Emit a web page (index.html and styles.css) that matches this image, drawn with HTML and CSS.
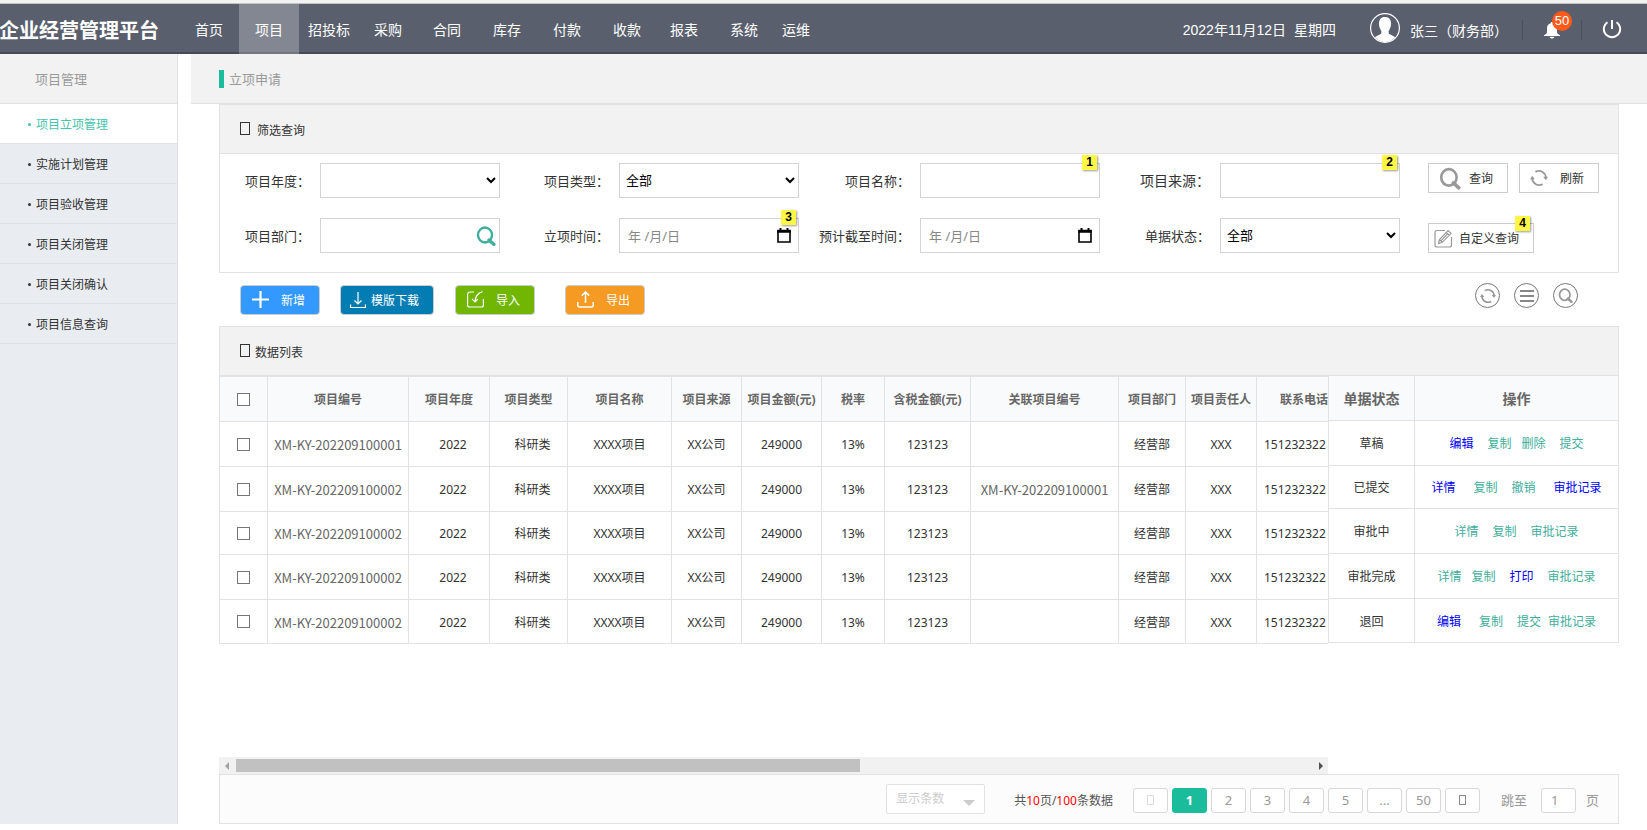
FILE: index.html
```
<!DOCTYPE html>
<html lang="zh-CN">
<head>
<meta charset="utf-8">
<title>企业经营管理平台</title>
<link rel="stylesheet" href="styles.css">
</head>
<body>
<svg width="0" height="0" class="defs" aria-hidden="true">
  <symbol id="i-search" viewBox="0 0 20 20"><ellipse cx="9" cy="9" rx="7" ry="7.500" fill="none" stroke="currentColor" stroke-width="2.400"/><path d="M13 14l5 4.500" stroke="currentColor" stroke-width="3.200" stroke-linecap="round"/></symbol>
  <symbol id="i-refresh" viewBox="0 0 20 20"><g fill="none" stroke="currentColor" stroke-width="2"><path d="M6 3.200A7.800 7.800 0 0 1 17.600 9.500M14 16.800A7.800 7.800 0 0 1 2.400 10.500"/></g><path d="M0 11.300L2.400 7.600l3 3.700zM14.600 8.700H20l-2.400 3.700z" fill="currentColor"/></symbol>
</svg>
<div class="strip"></div>
<header class="top">
  <h1 class="brand">企业经营管理平台</h1>
  <nav class="nav">
    <a href="#">首页</a><a href="#" class="on">项目</a><a href="#">招投标</a><a href="#">采购</a><a href="#">合同</a><a href="#">库存</a><a href="#">付款</a><a href="#">收款</a><a href="#">报表</a><a href="#">系统</a><a href="#">运维</a>
  </nav>
  <div class="date"><span>2022年11月12日</span><span>星期四</span></div>
  <svg class="avatar" viewBox="0 0 30 30"><circle cx="15" cy="15" r="14.400" fill="none" stroke="#fff" stroke-width="1.200"/><path d="M15 4c4 0 6 2.500 6 6.500 0 3-.8 5.500-2.300 7.200v2.300c0 1 1.500 1.600 3.500 2.400 1.200.5 2.300 1 2.800 1.800A13.500 13.500 0 0 1 15 29 13.500 13.500 0 0 1 5 24.200c.5-.8 1.600-1.300 2.800-1.800 2-.8 3.500-1.400 3.500-2.400v-2.300C9.800 16 9 13.500 9 10.500 9 6.500 11 4 15 4z" fill="#fff"/></svg>
  <span class="user">张三（财务部）</span>
  <button class="bell" type="button" aria-label="通知"><svg width="16" height="17" viewBox="0 0 16 17"><path d="M8 0c.8 0 1.300.5 1.300 1.200 2.400.6 3.700 2.600 3.700 5V10c0 1.500 1 2.200 3 3.200V14H0v-.8C2 12.200 3 11.500 3 10V6.200c0-2.400 1.300-4.400 3.700-5C6.700.5 7.200 0 8 0zM5.500 14.800h5C10.300 16 9.300 16.600 8 16.600S5.700 16 5.500 14.800z" fill="#fff"/></svg><span class="count">50</span></button>
  <button class="power" type="button" aria-label="退出"><svg width="20" height="20" viewBox="0 0 20 20" fill="none" stroke="#fff" stroke-width="1.900"><path d="M5.500 3.200a8.200 8.200 0 1 0 9 0M10 1v9"/></svg></button>
</header>
<div class="layout">
  <aside class="side">
    <h2>项目管理</h2>
    <a href="#" class="on">项目立项管理</a><a href="#">实施计划管理</a><a href="#">项目验收管理</a><a href="#">项目关闭管理</a><a href="#">项目关闭确认</a><a href="#">项目信息查询</a>
  </aside>
  <main class="main">
    <h2 class="title"><i></i>立项申请</h2>
    <div class="body">
      <section class="panel">
        <h3><i class="box"></i><span class="wide">筛选查询</span></h3>
        <form class="filter">
          <label for="f1">项目年度：</label><div class="field"><select id="f1"><option></option></select></div>
          <label for="f2">项目类型：</label><div class="field"><select id="f2"><option>全部</option></select></div>
          <label for="f3">项目名称：</label><div class="field"><input id="f3" type="text"><b class="tag">1</b></div>
          <label for="f4" class="large">项目来源：</label><div class="field"><input id="f4" type="text"><b class="tag">2</b></div>
          <div class="btns"><button class="btn" type="button"><svg width="22" height="23"><use href="#i-search"/></svg><span>查询</span></button><button class="btn" type="button"><svg width="18" height="18"><use href="#i-refresh"/></svg><span>刷新</span></button></div>
          <label for="f5">项目部门：</label><div class="field"><input id="f5" type="text"><svg class="pick" width="20" height="20"><use href="#i-search"/></svg></div>
          <label for="f6">立项时间：</label><div class="field"><input id="f6" type="text" placeholder="年 /月/日"><svg class="cal" width="14" height="15" viewBox="0 0 14 15"><path d="M1 3h12v11H1z" fill="none" stroke="#000" stroke-width="1.600"/><path d="M.3 1.800h13.400v3H.3zM2.500 0h2v3h-2zM9.500 0h2v3h-2z"/></svg><b class="tag">3</b></div>
          <label for="f7">预计截至时间：</label><div class="field"><input id="f7" type="text" placeholder="年 /月/日"><svg class="cal" width="14" height="15" viewBox="0 0 14 15"><path d="M1 3h12v11H1z" fill="none" stroke="#000" stroke-width="1.600"/><path d="M.3 1.800h13.400v3H.3zM2.500 0h2v3h-2zM9.500 0h2v3h-2z"/></svg></div>
          <label for="f8">单据状态：</label><div class="field"><select id="f8"><option>全部</option></select></div>
          <div class="btns low"><button class="btn custom" type="button"><svg width="19" height="19" viewBox="0 0 19 19" fill="none" stroke="#999" stroke-width="1.200"><path d="M11 1.500H3a2 2 0 0 0-2 2V16a2 2 0 0 0 2 2h12.500a2 2 0 0 0 2-2V8"/><path d="M4.500 14.500l1-4L14 1.500l3 2.800-8.700 9zM12.200 3.400l3 2.800M5.500 10.500l2.800 2.800M7 11.800l6.500-7"/></svg><span>自定义查询</span><b class="tag">4</b></button></div>
        </form>
      </section>
      <div class="tools">
        <button class="act add" type="button"><svg width="17" height="17" viewBox="0 0 17 17" stroke="#fff" stroke-width="2.200"><path d="M8.500 0v17M0 8.500h17"/></svg><span>新增</span></button>
        <button class="act tpl" type="button"><svg width="16" height="16" viewBox="0 0 16 16" fill="none" stroke="#fff" stroke-width="1.200"><path d="M8 0v12M4.500 8.500L8 12l3.500-3.500M.6 12.500v3h14.800v-3"/></svg><span>模版下载</span></button>
        <button class="act imp" type="button"><svg width="17" height="17" viewBox="0 0 17 17" fill="none" stroke="#fff" stroke-width="1.200"><path d="M7 1H3a2.400 2.400 0 0 0-2.400 2.400V14A2 2 0 0 0 2.600 16h11.800a2 2 0 0 0 2-2V8M15.500.6C11 2 8.500 5 8 10.500M5 7.800l3 3 2.800-2.600"/></svg><span>导入</span></button>
        <button class="act exp" type="button"><svg width="17" height="17" viewBox="0 0 17 17" fill="none" stroke="#fff" stroke-width="1.500"><path d="M8.500 12V1.200M4.800 4.600l3.700-3.700 3.700 3.700M.8 11v3.500a1.500 1.500 0 0 0 1.500 1.500h12.400a1.500 1.500 0 0 0 1.500-1.500V11"/></svg><span>导出</span></button>
        <div class="rounds">
          <button type="button" aria-label="刷新"><svg width="16" height="16"><use href="#i-refresh"/></svg></button>
          <button type="button" aria-label="列表"><svg width="14" height="12" viewBox="0 0 14 12" stroke="#888" stroke-width="1.800"><path d="M0 1h14M0 6h14M0 11h14"/></svg></button>
          <button type="button" aria-label="搜索"><svg width="15" height="15"><use href="#i-search"/></svg></button>
        </div>
      </div>
      <section class="panel list"><h3><i class="box"></i><span>数据列表</span></h3></section>
      <div class="grid">
        <div class="scroll">
          <table class="data">
            <colgroup><col class="c48"><col class="c141"><col class="c81"><col class="c78"><col class="c104"><col class="c70"><col class="c80"><col class="c63"><col class="c86"><col class="c148"><col class="c67"><col class="c71"><col></colgroup>
            <thead><tr><th><input type="checkbox" aria-label="全选"></th><th>项目编号</th><th>项目年度</th><th>项目类型</th><th>项目名称</th><th>项目来源</th><th>项目金额(元)</th><th>税率</th><th>含税金额(元)</th><th>关联项目编号</th><th>项目部门</th><th>项目责任人</th><th class="tel">联系电话</th></tr></thead>
            <tbody>
            <tr><td><input type="checkbox" aria-label="选择"></td><td class="no">XM-KY-202209100001</td><td class="in">2022</td><td class="in">科研类</td><td>XXXX项目</td><td>XX公司</td><td>249000</td><td>13%</td><td>123123</td><td></td><td>经营部</td><td>XXX</td><td class="tel">151232322</td></tr>
            <tr><td><input type="checkbox" aria-label="选择"></td><td class="no">XM-KY-202209100002</td><td class="in">2022</td><td class="in">科研类</td><td>XXXX项目</td><td>XX公司</td><td>249000</td><td>13%</td><td>123123</td><td class="no">XM-KY-202209100001</td><td>经营部</td><td>XXX</td><td class="tel">151232322</td></tr>
            <tr class="short"><td><input type="checkbox" aria-label="选择"></td><td class="no">XM-KY-202209100002</td><td class="in">2022</td><td class="in">科研类</td><td>XXXX项目</td><td>XX公司</td><td>249000</td><td>13%</td><td>123123</td><td></td><td>经营部</td><td>XXX</td><td class="tel">151232322</td></tr>
            <tr><td><input type="checkbox" aria-label="选择"></td><td class="no">XM-KY-202209100002</td><td class="in">2022</td><td class="in">科研类</td><td>XXXX项目</td><td>XX公司</td><td>249000</td><td>13%</td><td>123123</td><td></td><td>经营部</td><td>XXX</td><td class="tel">151232322</td></tr>
            <tr class="last"><td><input type="checkbox" aria-label="选择"></td><td class="no">XM-KY-202209100002</td><td class="in">2022</td><td class="in">科研类</td><td>XXXX项目</td><td>XX公司</td><td>249000</td><td>13%</td><td>123123</td><td></td><td>经营部</td><td>XXX</td><td class="tel">151232322</td></tr>
            </tbody>
          </table>
        </div>
        <table class="data fixed">
          <colgroup><col class="c86"><col></colgroup>
          <thead><tr><th>单据状态</th><th>操作</th></tr></thead>
          <tbody>
          <tr><td>草稿</td><td><a href="#" class="blue">编辑</a><a href="#" class="g14">复制</a><a href="#" class="g10">删除</a><a href="#" class="g14">提交</a></td></tr>
          <tr class="short"><td>已提交</td><td><a href="#" class="blue">详情</a><a href="#" class="g18">复制</a><a href="#" class="g14">撤销</a><a href="#" class="g18 blue">审批记录</a></td></tr>
          <tr><td>审批中</td><td><a href="#">详情</a><a href="#" class="g14">复制</a><a href="#" class="g14">审批记录</a></td></tr>
          <tr><td>审批完成</td><td><a href="#">详情</a><a href="#" class="g10">复制</a><a href="#" class="g14 blue">打印</a><a href="#" class="g14">审批记录</a></td></tr>
          <tr class="last"><td>退回</td><td><a href="#" class="blue">编辑</a><a href="#" class="g18">复制</a><a href="#" class="g14">提交</a><a href="#" class="g7">审批记录</a></td></tr>
          </tbody>
        </table>
      </div>
      <div class="bar"><i class="larr"></i><div class="track"><div class="thumb"></div></div><i class="rarr"></i></div>
      <footer class="pager">
        <button class="size" type="button">显示条数<i></i></button>
        <span class="total">共<em>10</em>页/<em>100</em>条数据</span>
        <div class="pages">
          <button type="button" class="off" aria-label="上一页"><i class="mini"></i></button><button type="button" class="on">1</button><button type="button">2</button><button type="button">3</button><button type="button">4</button><button type="button">5</button><button type="button">...</button><button type="button">50</button><button type="button" aria-label="下一页"><i class="mini"></i></button>
        </div>
        <label for="pg">跳至</label><input id="pg" type="text" value="1"><span>页</span>
      </footer>
    </div>
  </main>
</div>
</body>
</html>
```
FILE: styles.css
```
* { box-sizing: border-box; }
body { margin: 0; background: #fff; color: #333; font: 12px/18px "Noto Sans", "Noto Sans CJK SC", sans-serif; }
a { text-decoration: none; color: inherit; }
h1, h2, h3 { margin: 0; font-weight: normal; }
button, input, select { font: inherit; color: inherit; margin: 0; padding: 0; }
button { background: none; border: 0; display: flex; align-items: center; }
.defs { position: absolute; }

.strip { height: 4px; background: #f2f2f2; border-bottom: 1px solid #c4c4c4; }
.top { display: flex; align-items: center; height: 50px; background: #5a5f6d; border-bottom: 2px solid #474b58; color: #fff; font: 14px/20px "Liberation Sans", "Noto Sans CJK SC", sans-serif; }
.brand { flex: none; width: 180px; margin-left: -1px; padding-top: 6px; font-size: 20px; font-weight: bold; line-height: 28px; white-space: nowrap; }
.nav { display: grid; grid-template-columns: 60px 60px 60px 58px repeat(4, 60px) 54px 66px 38px; height: 50px; margin-bottom: -2px; flex: none; line-height: 52px; text-align: center; }
.nav .on { background: rgba(255, 255, 255, .25); }
.date { margin-left: auto; padding-top: 4px; display: flex; gap: 8px; white-space: nowrap; }
.avatar { width: 30px; height: 30px; margin-left: 34px; flex: none; }
.user { margin-left: 10px; padding-top: 6px; white-space: nowrap; }
.bell { position: relative; height: 20px; margin: 4px 0 0 14px; padding: 0 21px; border: solid #4a4e5b; border-width: 0 1px; }
.count { position: absolute; left: 29px; top: -9px; width: 20px; height: 20px; border-radius: 50%; background: #ff5a1a; font-size: 13px; line-height: 20px; text-align: center; }
.power { margin: 2px 25px 0 20px; }

.layout { display: flex; align-items: stretch; }
.side { flex: none; width: 178px; background: #e9edf2; border-right: 1px solid #e0e0e0; }
.side h2 { height: 50px; padding-left: 35px; background: #f2f2f2; border-bottom: 1px solid #e2e2e2; font-size: 13px; line-height: 50px; color: #999; }
.side a { display: flex; align-items: center; gap: 5px; height: 40px; padding: 2px 0 0 28px; border-bottom: 1px solid #e0e3e6; }
.side a::before { content: ""; width: 3px; height: 3px; border-radius: 50%; background: currentColor; }
.side .on { background: #fff; color: #45c4ac; }
.main { flex: 1; min-width: 0; margin-left: 13px; }
.title { display: flex; align-items: center; gap: 5px; height: 50px; padding-left: 28px; background: #f2f2f2; border-bottom: 1px solid #e2e2e2; font-size: 13px; color: #999; }
.title i { width: 5px; height: 18px; background: #1abc9c; }
.body { margin: 0 28px; }

.panel { border: 1px solid #e2e2e2; }
.panel h3 { display: flex; align-items: center; gap: 5px; height: 49px; padding: 4px 0 0 20px; background: #f2f2f2; border-bottom: 1px solid #e2e2e2; font-size: 12px; }
.panel .wide { margin-left: 2px; }
.list { border-bottom: 0; }
.box { width: 10px; height: 13px; margin-bottom: 6px; border: 1px solid #333; }
.filter { display: grid; grid-template-columns: 90px 180px 119px 180px 121px 180px 120px 180px 1fr; grid-template-rows: 35px 35px; row-gap: 20px; column-gap: 0; padding: 9px 0 19px; font-size: 13px; align-items: center; }
.filter label { text-align: right; white-space: nowrap; }
.filter .large { font-size: 14px; }
.field { position: relative; height: 35px; margin-left: 10px; margin-right: -10px; }
.field input, .field select { width: 100%; height: 35px; border: 1px solid #d4d4d4; background: #fff; color: #000; border-radius: 0; padding: 0 8px; outline: 0; }
.field select { padding: 0 2px 2px; }
.field input::placeholder { color: #888; opacity: 1; }
.pick, .cal { position: absolute; right: 4px; top: 8px; color: #40ae9c; }
.cal { right: 8px; top: 10px; }
.tag { position: absolute; right: 3px; top: -8px; width: 15px; height: 15px; background: #fff745; box-shadow: 1px 1px 2px rgba(0, 0, 0, .4); color: #000; font: bold 12px/15px "Liberation Sans", sans-serif; text-align: center; }
.btns { display: flex; gap: 11px; margin-left: 38px; align-self: start; }
.low { align-self: end; }
.btn { position: relative; justify-content: space-between; width: 80px; height: 30px; padding: 0 14px 0 10px; border: 1px solid #ccc; background: #fff; font-size: 12px; color: #333; }
.btn span { padding-top: 2px; }
.btn svg { color: #999; flex: none; }
.custom { width: 106px; padding: 0 14px 0 5px; }

.tools { display: flex; align-items: center; height: 53px; padding: 0 41px 0 21px; }
.act { justify-content: space-between; width: 80px; height: 30px; margin-right: 20px; padding: 2px 14px 0 11px; border: 1px solid #ccc; border-radius: 4px; color: #fff; }
.act svg { margin-bottom: 2px; }
.add { background: #3399ff; }
.tpl { width: 94px; background: #027db4; margin-right: 21px; padding: 2px 14px 0 9px; }
.imp { background: #70b603; margin-right: 30px; }
.exp { background: #f59a23; }
.rounds { display: flex; gap: 14px; margin-left: auto; margin-bottom: 8px; color: #999; }
.rounds button { justify-content: center; width: 25px; height: 25px; border: 1px solid #777; border-radius: 50%; color: #999; }

.grid { display: flex; align-items: flex-start; height: 381px; }
.scroll { flex: 1; min-width: 0; overflow-x: auto; scrollbar-width: none; border-top: 1px solid #e2e2e2; border-left: 1px solid #e2e2e2; }
.data { table-layout: fixed; border-collapse: separate; border-spacing: 0; width: 100%; }
.data th, .data td { height: 45px; padding: 2px 0 0; border: solid #e2e2e2; border-width: 0 1px 1px 0; text-align: center; white-space: nowrap; }
.data th { background: #f9fafc; color: #666; font-weight: bold; }
.data .short td { height: 43px; }
.data .last td { height: 44px; }
.data .no { color: #666; font: 13px/18px "Noto Sans CJK SC", sans-serif; }
.data .in { padding-left: 8px; }
.data .tel { border-right: 0; text-align: left; padding-left: 7px; }
.data th.tel { text-align: right; padding-left: 0; }
.data input { appearance: none; display: block; width: 13px; height: 13px; margin: -2px auto 0; border: 1px solid #767676; background: #fff; }
.data input:checked { background: #1abc9c; }
.data.fixed { flex: none; width: 291px; border-left: 1px solid #e2e2e2; }
.fixed th { font-size: 14px; }
.fixed a { color: #40ae9c; }
.fixed .blue { color: #0000ff; }
.c48 { width: 48px; } .c63 { width: 63px; } .c67 { width: 67px; } .c70 { width: 70px; } .c71 { width: 71px; } .c78 { width: 78px; } .c80 { width: 80px; } .c81 { width: 81px; } .c86 { width: 86px; } .c104 { width: 104px; } .c141 { width: 141px; } .c148 { width: 148px; }
.g7 { margin-left: 7px; } .g10 { margin-left: 10px; } .g14 { margin-left: 14px; } .g18 { margin-left: 18px; }

.bar { display: flex; align-items: center; height: 17px; margin-right: 291px; padding: 0 5px 0 6px; background: #f1f1f1; }
.track { flex: 1; margin: 0 7px; }
.thumb { width: 58%; height: 13px; background: #c1c1c1; }
.larr, .rarr { border: 4px solid transparent; }
.larr { border-left: 0; border-right-color: #a3a3a3; }
.rarr { border-right: 0; border-left-color: #505050; }

.pager { display: flex; align-items: center; justify-content: flex-end; height: 50px; padding: 2px 19px 0 0; border: 1px solid #e2e2e2; background: #fcfcfc; color: #999; font-size: 13px; }
.size { justify-content: space-between; width: 99px; height: 30px; margin: -2px 29px 0 0; padding: 0 9px; border: 1px solid #e2e2e2; border-radius: 2px; background: #fff; color: #ccc; font-size: 12px; }
.size i { margin-top: 8px; border: 6px solid transparent; border-top-color: #ccc; border-bottom: 0; }
.total { padding-top: 2px; color: #555; font-size: 12px; }
.total em { font-style: normal; color: #f00; }
.pages { display: flex; gap: 4px; margin: 0 21px 0 20px; }
.pages button, .pager input { justify-content: center; width: 35px; height: 25px; border: 1px solid #d8d8d8; border-radius: 3px; background: #fff; }
.pages .on { background: #1abc9c; border-color: #1abc9c; color: #fff; font-weight: bold; }
.mini { width: 7px; height: 10px; border: 1px solid #888; }
.off .mini { border-color: #ddd; }
.pager input { margin: 0 10px 0 14px; padding-left: 9px; }
```
